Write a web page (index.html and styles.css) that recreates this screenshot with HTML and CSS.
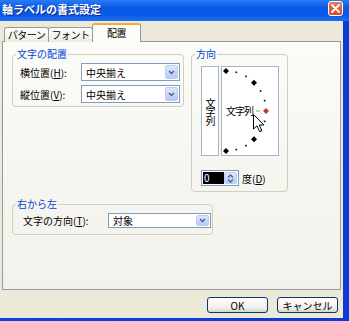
FILE: index.html
```html
<!DOCTYPE html>
<html lang="ja">
<head>
    <meta charset="UTF-8">
    <title>軸ラベルの書式設定</title>
    <link rel="stylesheet" href="styles.css">
</head>
<body>

<div class="window">
    <div class="titlebar">
        <span class="title">軸ラベルの書式設定</span>
        <span class="close-btn">
            <svg width="9" height="9" viewBox="0 0 9 9">
                <path d="M1 1 L8 8 M8 1 L1 8" stroke="#fff" stroke-width="1.8" stroke-linecap="round"/>
            </svg>
        </span>
    </div>

    <div class="client">
        <div class="tabs">
            <div class="tab">パターン</div>
            <div class="tab">フォント</div>
            <div class="tab active">配置</div>
        </div>

        <div class="panel">
            <div class="top-row">
                <!-- 文字の配置 -->
                <fieldset class="group align-group">
                    <legend>文字の配置</legend>
                    <div class="form-grid">
                        <span class="field-label">横位置(<u>H</u>):</span>
                        <div class="combo">
                            <span class="combo-text">中央揃え</span>
                            <span class="drop-btn">
                                <svg width="7" height="5" viewBox="0 0 7 5"><path d="M1 1 L3.5 3.5 L6 1" fill="none" stroke="#4d6185" stroke-width="1.5"/></svg>
                            </span>
                        </div>
                        <span class="field-label">縦位置(<u>V</u>):</span>
                        <div class="combo">
                            <span class="combo-text">中央揃え</span>
                            <span class="drop-btn">
                                <svg width="7" height="5" viewBox="0 0 7 5"><path d="M1 1 L3.5 3.5 L6 1" fill="none" stroke="#4d6185" stroke-width="1.5"/></svg>
                            </span>
                        </div>
                    </div>
                </fieldset>

                <!-- 方向 -->
                <fieldset class="group orient-group">
                    <legend>方向</legend>
                    <div class="orient-boxes">
                        <div class="vertical-box"><span>文字列</span></div>
                        <div class="dial">
                            <svg class="dial-marks" width="58" height="90" viewBox="0 0 58 90">
                                <g fill="#000">
                                    <path d="M5 2 L8 5 L5 8 L2 5 Z"/>
                                    <rect x="14.5" y="5.5" width="1.6" height="1.6"/>
                                    <rect x="24.2" y="9.6" width="1.6" height="1.6"/>
                                    <path d="M33 13.7 L36 16.7 L33 19.7 L30 16.7 Z"/>
                                    <rect x="38.8" y="24.2" width="1.6" height="1.6"/>
                                    <rect x="42.8" y="33.8" width="1.6" height="1.6"/>
                                    <rect x="42.8" y="54.6" width="1.6" height="1.6"/>
                                    <rect x="38.8" y="64.2" width="1.6" height="1.6"/>
                                    <path d="M33 70.3 L36 73.3 L33 76.3 L30 73.3 Z"/>
                                    <rect x="24.2" y="78.8" width="1.6" height="1.6"/>
                                    <rect x="14.5" y="82.8" width="1.6" height="1.6"/>
                                    <path d="M5 82 L8 85 L5 88 L2 85 Z"/>
                                </g>
                                <rect x="35" y="44.4" width="4" height="1.2" fill="#7cc07c"/>
                                <path d="M45 42 L48 45 L45 48 L42 45 Z" fill="#c0383c"/>
                            </svg>
                            <span class="dial-text">文字列</span>
                            <svg class="cursor" width="12" height="19" viewBox="0 0 12 19">
                                <path d="M0.5 0.5 L0.5 15 L4 11.8 L6.6 17.6 L8.8 16.6 L6.3 11 L10.8 11 Z" fill="#fff" stroke="#000" stroke-width="1"/>
                            </svg>
                        </div>
                    </div>
                    <div class="degree-row">
                        <div class="spin">
                            <span class="spin-field">0</span>
                            <span class="spin-btns">
                                <svg width="7" height="4" viewBox="0 0 7 4"><path d="M1 3.5 L3.5 1 L6 3.5" fill="none" stroke="#4d6185" stroke-width="1.3"/></svg>
                                <svg width="7" height="4" viewBox="0 0 7 4"><path d="M1 0.5 L3.5 3 L6 0.5" fill="none" stroke="#4d6185" stroke-width="1.3"/></svg>
                            </span>
                        </div>
                        <span class="field-label">度(<u>D</u>)</span>
                    </div>
                </fieldset>
            </div>

            <!-- 右から左 -->
            <fieldset class="group rtl-group">
                <legend>右から左</legend>
                <div class="form-grid rtl-grid">
                    <span class="field-label">文字の方向(<u>T</u>):</span>
                    <div class="combo small-combo">
                        <span class="combo-text">対象</span>
                        <span class="drop-btn">
                            <svg width="7" height="5" viewBox="0 0 7 5"><path d="M1 1 L3.5 3.5 L6 1" fill="none" stroke="#4d6185" stroke-width="1.5"/></svg>
                        </span>
                    </div>
                </div>
            </fieldset>
        </div>

        <div class="buttons">
            <button class="xp-button">OK</button>
            <button class="xp-button">キャンセル</button>
        </div>
    </div>
</div>

</body>
</html>
```

FILE: styles.css
```css
body {
    margin: 0;
    width: 349px;
    height: 321px;
    overflow: hidden;
    background-color: #0a3fd8;
    font-family: "Noto Sans CJK JP", "Noto Sans", sans-serif;
    font-size: 10px;
    color: #000;
}

.window {
    display: flex;
    flex-direction: column;
    height: 321px;
    background: linear-gradient(to right, #0a44dc, #0b3bd4);
}

/* Title bar */
.titlebar {
    height: 21px;
    display: flex;
    align-items: flex-start;
    justify-content: space-between;
    padding: 0 6px 0 2px;
    background: linear-gradient(to bottom, #2b7cf5 0%, #0a5ae8 35%, #0a58e6 70%, #1d6ef3 100%);
}

.title {
    color: #fff;
    font-weight: bold;
    font-size: 11px;
    line-height: 19px;
    text-shadow: 1px 1px #0a2a8a;
}

.close-btn {
    width: 15px;
    height: 15px;
    margin-top: 1px;
    box-sizing: border-box;
    border: 1px solid #fff;
    border-radius: 3px;
    background: linear-gradient(to bottom, #e8795c, #d64a25);
    display: flex;
    justify-content: center;
    align-items: center;
}

/* Dialog body */
.client {
    flex: 1;
    margin: 0 6px 3px 0;
    padding: 3px 2px 0 2px;
    background-color: #ece9d8;
    display: flex;
    flex-direction: column;
}

.tabs {
    display: flex;
    align-items: flex-end;
    height: 18px;
    padding-left: 2px;
    margin-bottom: -1px;
    position: relative;
    z-index: 1;
}

.tab {
    height: 15px;
    width: 45px;
    box-sizing: border-box;
    border: 1px solid #919b9c;
    border-bottom: none;
    border-radius: 3px 3px 0 0;
    background: linear-gradient(to bottom, #ffffff, #ecebe6);
    text-align: center;
    line-height: 14px;
    letter-spacing: -0.5px;
    margin-right: -1px;
}

.tab.active {
    height: 19px;
    width: 49px;
    border-top: 2px solid #f5a83a;
    background: #fbfbf8;
    line-height: 16px;
    margin-right: 0;
}

.panel {
    height: 249px;
    box-sizing: border-box;
    border: 1px solid #919b9c;
    background: linear-gradient(to bottom, #fbfbf8, #f2f1eb);
    padding: 6px 9px;
}

.top-row {
    display: flex;
    gap: 7px;
    align-items: flex-start;
}

/* Group boxes */
.group {
    margin: 0;
    padding: 0;
    border: 1px solid #d0d0bf;
    border-radius: 4px;
    box-sizing: border-box;
    min-width: 0;
}

.group legend {
    padding: 0 1px;
    margin-left: 3px;
    color: #0046d5;
    font-size: 10px;
    line-height: 12px;
}

.align-group {
    width: 172px;
}

.orient-group {
    width: 97px;
}

.rtl-group {
    width: 201px;
    margin-top: 6px;
}

.form-grid {
    display: grid;
    grid-template-columns: 61px 99px;
    row-gap: 4px;
    align-items: center;
    padding: 3px 3px 3px 7px;
}

.rtl-grid {
    grid-template-columns: 85px 103px;
    padding: 3px 2px 6px 10px;
}

.field-label {
    white-space: nowrap;
}

/* Combo boxes */
.combo {
    height: 18px;
    box-sizing: border-box;
    border: 1px solid #7f9db9;
    background-color: #fff;
    display: flex;
    align-items: stretch;
    padding: 1px;
}

.small-combo {
    height: 15px;
}

.combo-text {
    flex: 1;
    padding-left: 3px;
    display: flex;
    align-items: center;
}

.drop-btn {
    width: 13px;
    box-sizing: border-box;
    border: 1px solid #bccdf5;
    border-radius: 2px;
    background: linear-gradient(to bottom, #dde7fd, #b6caf6);
    display: flex;
    justify-content: center;
    align-items: center;
}

/* Orientation */
.orient-boxes {
    display: flex;
    gap: 2px;
    padding: 6px 0 0 9px;
}

.vertical-box {
    width: 18px;
    height: 90px;
    box-sizing: border-box;
    border: 1px solid #a6b4c6;
    background-color: #fff;
    display: flex;
    justify-content: center;
    align-items: center;
}

.vertical-box span {
    writing-mode: vertical-rl;
    line-height: 10px;
    letter-spacing: -1px;
}

.dial {
    width: 58px;
    height: 90px;
    box-sizing: border-box;
    border: 1px solid #a6b4c6;
    background-color: #fff;
    position: relative;
}

.dial-marks {
    position: absolute;
    left: -1px;
    top: -1px;
}

.dial-text {
    position: absolute;
    left: 4px;
    top: 37px;
    line-height: 14px;
    letter-spacing: -1px;
}

.cursor {
    position: absolute;
    left: 31px;
    top: 47px;
}

.degree-row {
    display: flex;
    align-items: center;
    gap: 3px;
    padding: 14px 0 5px 9px;
}

.spin {
    width: 38px;
    height: 16px;
    box-sizing: border-box;
    border: 1px solid #7f9db9;
    background-color: #fff;
    display: flex;
    padding: 1px;
}

.spin-field {
    flex: 1;
    background-color: #000;
    color: #fff;
    line-height: 12px;
    padding-left: 1px;
}

.spin-btns {
    width: 13px;
    display: flex;
    flex-direction: column;
    justify-content: space-around;
    align-items: center;
    border: 1px solid #bccdf5;
    border-radius: 2px;
    background: linear-gradient(to bottom, #dde7fd, #b6caf6);
    box-sizing: border-box;
}

/* Dialog buttons */
.buttons {
    display: flex;
    justify-content: flex-end;
    gap: 9px;
    margin-top: 7px;
    padding-right: 3px;
}

.xp-button {
    width: 61px;
    height: 16px;
    padding: 0;
    border: 1px solid #003c74;
    border-radius: 3px;
    background: linear-gradient(to bottom, #ffffff, #f0efea 70%, #d8d3c7);
    font-family: "Noto Sans CJK JP", "Noto Sans", sans-serif;
    font-size: 10px;
    line-height: 13px;
    color: #000;
}
```
